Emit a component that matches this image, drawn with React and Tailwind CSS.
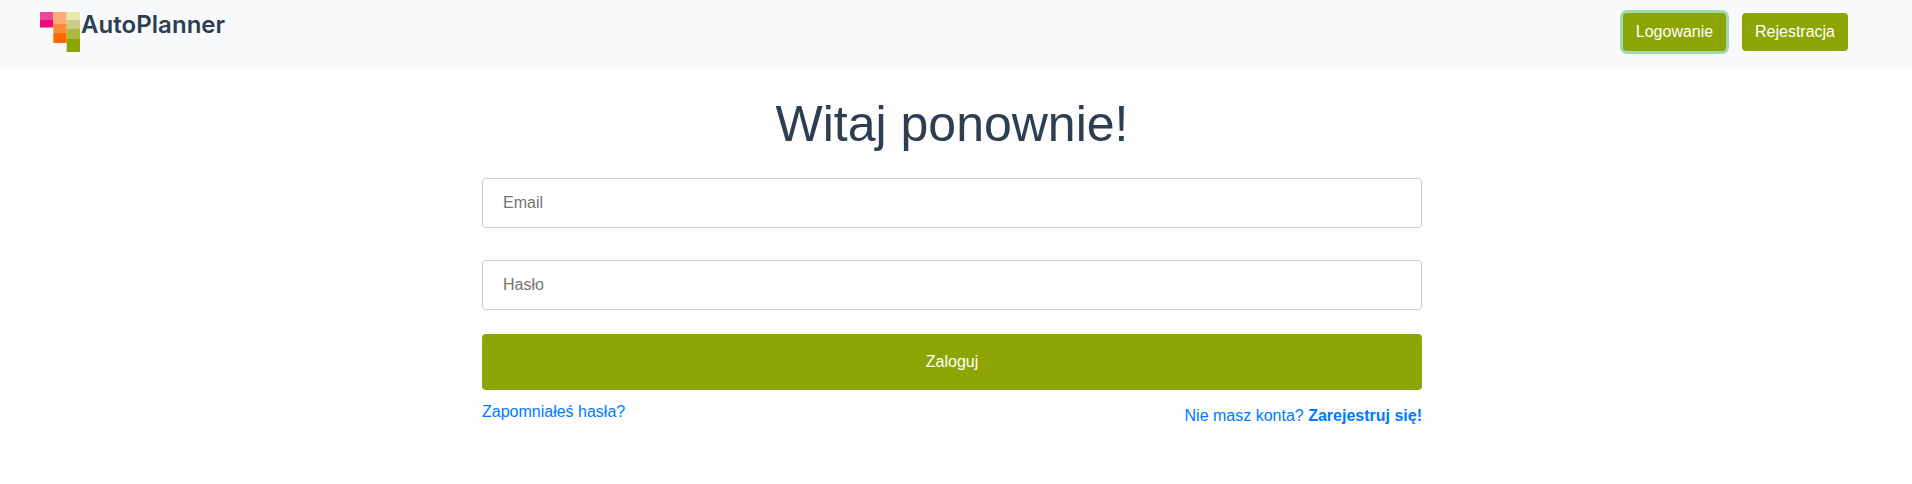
function Logo() {
  return (
    <svg width="40" height="40" viewBox="0 0 40 40" aria-hidden="true">
      <rect width="13.3" height="8" fill="#ef479e" />
      <rect y="8" width="13.3" height="7.5" fill="#ee0979" />
      <rect x="13.3" width="13.4" height="12" fill="#ffab73" />
      <rect x="13.3" y="12" width="13.4" height="9" fill="#ff8a3c" />
      <rect x="13.3" y="21" width="13.4" height="10" fill="#ff6a00" />
      <rect x="26.7" width="13.3" height="8" fill="#e8e8b0" />
      <rect x="26.7" y="8" width="13.3" height="9" fill="#cace83" />
      <rect x="26.7" y="17" width="13.3" height="10" fill="#adb941" />
      <rect x="26.7" y="27" width="13.3" height="13" fill="#8da504" />
    </svg>
  );
}

function Field({ type, label }) {
  return (
    <input
      type={type}
      placeholder={label}
      className="block h-[50px] w-full rounded border border-[#cccccc] bg-white px-5 text-base text-[#495057] placeholder:text-[#757575] placeholder:opacity-100"
    />
  );
}

export default function App() {
  return (
    <div className="min-h-screen bg-white font-['Liberation_Sans',Arial,sans-serif] text-base text-[#2c3e50]">
      <header className="flex h-[67px] items-start justify-between bg-[#f8f9fb] pr-16 pl-10">
        <a href="#" className="flex pt-3">
          <Logo />
          <span className="pl-px font-['Inter',sans-serif] text-[24px] leading-[25px] font-semibold tracking-[0.05px]">
            AutoPlanner
          </span>
        </a>
        <nav className="flex gap-4 pt-[13px] text-white">
          <button className="h-[38px] w-[103px] rounded bg-[#8da504] ring-[3px] ring-[#9fd8b0]">Logowanie</button>
          <button className="h-[38px] w-[106px] rounded bg-[#8da504]">Rejestracja</button>
        </nav>
      </header>
      <main className="h-[381px] bg-[#fdfdfd] pt-[27px] pr-2">
        <form className="mx-auto flex w-[940px] flex-col">
          <h1 className="mb-6 text-center text-[50px] leading-[60px]">Witaj ponownie!</h1>
          <div className="flex flex-col gap-8">
            <Field type="email" label="Email" />
            <Field type="password" label="Hasło" />
          </div>
          <button type="button" className="mt-6 h-14 rounded bg-[#8da504] text-white">
            Zaloguj
          </button>
          <div className="flex justify-between pt-[10px] text-[#007bff]">
            <a href="#">Zapomniałeś hasła?</a>
            <a href="#" className="pt-1">
              Nie masz konta? <b className="font-bold">Zarejestruj się!</b>
            </a>
          </div>
        </form>
      </main>
    </div>
  );
}
